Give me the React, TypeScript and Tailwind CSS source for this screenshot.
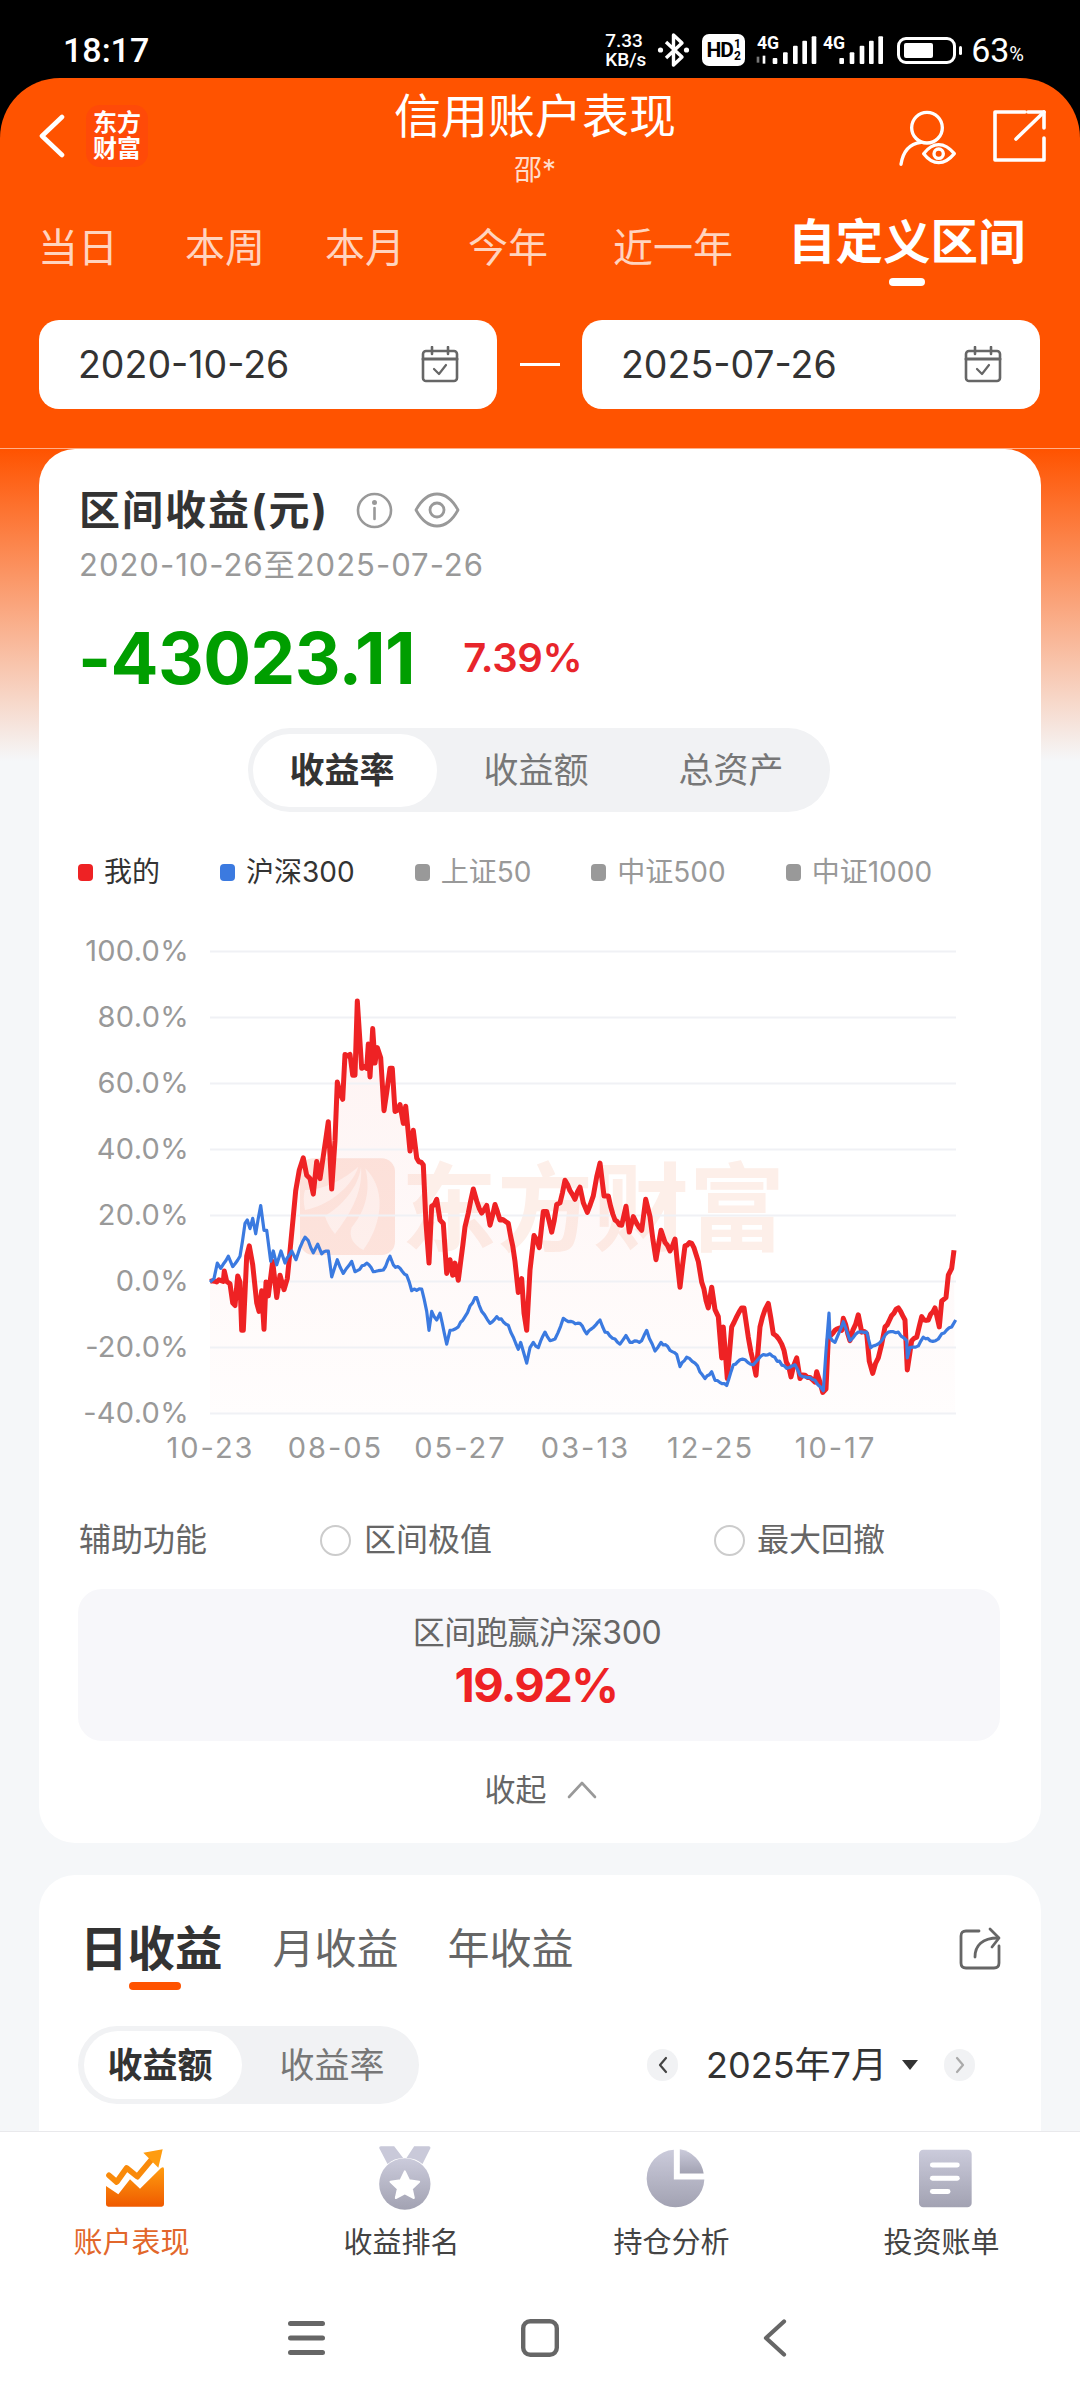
import React from 'react';

// chart traces read off the reference, [x, y] in zoomed units; right-hand part is offset by 1320
const RED_LEFT: number[][] = [[450,1048],[490,1048],[493,1018],[500,1048],[510,1055],[518,1110],[525,1118],[533,1032],[540,1050],[545,1190],[550,1190],[560,975],[568,945],[578,1000],[590,1110],[597,1135],[605,1075],[612,1187],[618,1050],[625,1090],[638,990],[650,1095],[660,1030],[672,1072],[682,1040],[690,960],[700,860],[707,785],[718,725],[730,690],[740,740],[750,750],[760,795],[770,700],[780,750],[790,685],[805,585],[815,780],[825,640],[832,470],[848,520],[855,390],[870,390],[878,450],[885,450],[892,235],[905,430],[920,430],[925,360],[930,455],[938,315],[945,415],[952,370],[962,400],[972,553],[980,500],[990,430],[997,430],[1005,555],[1020,535],[1030,590],[1037,540],[1050,670],[1060,610],[1070,690],[1090,710],[1098,880],[1107,995],[1115,830],[1130,810],[1140,870],[1150,880],[1160,1025],[1170,985],[1178,1030],[1185,995],[1195,1045],[1215,890],[1225,850],[1240,780],[1250,815],[1265,850],[1280,828],[1290,885],[1305,825],[1320,870]];
const RED_RIGHT: number[][] = [[25,880],[45,990],[55,1080],[65,1040],[72,1140],[80,1190],[90,1015],[102,915],[118,950],[130,845],[140,845],[155,905],[170,825],[180,820],[195,755],[210,785],[225,810],[240,775],[250,820],[262,848],[280,800],[290,745],[300,705],[312,800],[325,800],[345,870],[365,885],[378,830],[388,905],[400,860],[410,880],[425,900],[437,810],[450,860],[468,985],[483,900],[495,935],[510,960],[525,925],[540,1065],[555,945],[575,938],[595,990],[605,1050],[625,1125],[635,1065],[645,1130],[655,1150],[665,1270],[670,1180],[682,1330],[695,1180],[710,1150],[725,1125],[732,1125],[745,1210],[768,1320],[780,1180],[795,1130],[805,1112],[820,1200],[845,1230],[873,1325],[890,1270],[900,1330],[915,1320],[945,1340],[950,1310],[968,1370],[978,1360],[985,1215],[1005,1190],[1025,1190],[1030,1155],[1050,1220],[1075,1145],[1085,1195],[1100,1200],[1108,1280],[1118,1315],[1135,1270],[1145,1230],[1155,1180],[1195,1125],[1215,1160],[1222,1305],[1235,1220],[1250,1210],[1265,1150],[1285,1160],[1305,1125],[1318,1180],[1325,1105],[1338,1095],[1345,1030],[1355,1010],[1362,958]];
const BLUE_LEFT: number[][] = [[450,1050],[462,1040],[472,995],[482,1010],[505,975],[518,1005],[540,975],[555,880],[562,870],[570,895],[578,865],[587,910],[602,828],[612,900],[620,900],[632,990],[640,960],[650,1000],[663,960],[675,995],[695,960],[708,985],[720,950],[735,920],[745,930],[760,965],[773,940],[785,968],[805,960],[815,1035],[832,985],[850,1025],[875,990],[885,1020],[920,995],[940,1020],[970,1015],[990,975],[1000,1000],[1020,1010],[1040,1030],[1055,1075],[1085,1070],[1100,1135],[1107,1190],[1115,1135],[1130,1160],[1140,1140],[1160,1230],[1170,1190],[1195,1180],[1215,1150],[1245,1095],[1250,1095],[1265,1135],[1290,1170],[1310,1150]];
const BLUE_RIGHT: number[][] = [[25,1175],[40,1210],[55,1245],[62,1225],[80,1285],[90,1240],[100,1225],[115,1240],[135,1195],[150,1220],[165,1215],[190,1155],[205,1165],[240,1170],[260,1200],[300,1160],[315,1195],[345,1215],[360,1230],[378,1205],[390,1225],[425,1220],[440,1190],[465,1250],[483,1225],[530,1260],[540,1295],[560,1268],[585,1285],[615,1330],[635,1310],[645,1335],[680,1350],[700,1290],[720,1275],[735,1275],[760,1290],[790,1260],[810,1258],[860,1300],[885,1290],[900,1320],[945,1335],[970,1365],[978,1250],[987,1140],[990,1210],[1005,1225],[1030,1165],[1050,1220],[1075,1195],[1100,1195],[1112,1240],[1140,1225],[1165,1195],[1195,1195],[1220,1220],[1222,1270],[1230,1240],[1255,1235],[1270,1210],[1290,1220],[1315,1215],[1325,1200],[1355,1180],[1367,1160]];

// zoomed units to svg px: svg starts at page (210, 936)
const toSvg = (x: number, y: number): number[] => [x / 3 - 150, y / 2.9 - 16];

const rough = (left: number[][], right: number[][], amp: number, seed: number) => {
  const pts = [...left, ...right.map(([x, y]) => [x + 1320, y])].map(([x, y]) => toSvg(x, y));
  const out: number[][] = [];
  let n = seed;
  pts.forEach((p, i) => {
    out.push(p);
    const next = pts[i + 1];
    if (!next) return;
    const steps = Math.floor((next[0] - p[0]) / 2.2);
    for (let s = 1; s < steps; s++) {
      n += 1;
      const r = Math.sin(n * 12.9898) * 43758.5453;
      const j = (r - Math.floor(r) - 0.5) * 2 * amp;
      const t = s / steps;
      out.push([p[0] + (next[0] - p[0]) * t, p[1] + (next[1] - p[1]) * t + j]);
    }
  });
  return out;
};

const line = (pts: number[][]) => pts.map(([x, y]) => `${x.toFixed(1)},${y.toFixed(1)}`).join(' ');

const redPts = rough(RED_LEFT, RED_RIGHT, 2.4, 3);
const bluePts = rough(BLUE_LEFT, BLUE_RIGHT, 1.3, 91);
const gridYs = [15.5, 81.5, 147.5, 213.5, 279.5, 345.5, 411.5, 477.5];

const Chart = () => (
  <svg width="746" height="492" viewBox="0 0 746 492" className="block overflow-visible">
    <defs>
      <linearGradient id="areaFill" x1="0" y1="0" x2="0" y2="1">
        <stop offset="0" stopColor="#f0322a" stopOpacity="0.06" />
        <stop offset="1" stopColor="#f0322a" stopOpacity="0.01" />
      </linearGradient>
    </defs>
    <g transform="translate(70 194) scale(0.3333)">
      <rect x="60" y="85" width="285" height="290" rx="40" fill="#fde8e1" />
      <path d="M235 110C215 170 150 225 75 240C70 215 70 195 75 180C130 180 190 150 235 110Z" fill="#fef5f2" />
      <path d="M243 112C250 190 205 260 165 312C150 295 140 275 135 258C190 225 235 170 243 112Z" fill="#fef5f2" />
      <path d="M256 115C330 190 295 300 250 360C220 345 205 320 215 292C260 240 272 175 256 115Z" fill="#fef5f2" />
    </g>
    <text x="191" y="307" fontSize="96" fontWeight="700" fill="#fdefe9" fontFamily="'Noto Sans CJK SC', sans-serif">东方财富</text>
    <polygon points={`${line(redPts)} 745,477 0,477`} fill="url(#areaFill)" />
    {gridYs.map((y) => (
      <line key={y} x1="0" x2="746" y1={y} y2={y} stroke="#f0f1f5" strokeWidth="2" />
    ))}
    <polyline points={line(redPts)} fill="none" stroke="#ee2224" strokeWidth="5" strokeLinejoin="round" />
    <polyline points={line(bluePts)} fill="none" stroke="#3b7ae0" strokeWidth="3.2" strokeLinejoin="round" />
  </svg>
);

const CalendarIcon = () => (
  <svg width="38" height="37" viewBox="0 0 38 37" fill="none" stroke="#666" strokeWidth="2.6" strokeLinecap="round" strokeLinejoin="round">
    <rect x="2" y="5" width="34" height="30" rx="3" />
    <path d="M2 13H36" strokeWidth="3" />
    <path d="M11 1V8M27 1V8" />
    <path d="M13 23L18 28L25 19" strokeWidth="2.2" />
  </svg>
);

const DateBox = ({ value }: { value: string }) => (
  <div className="w-[458px] h-[89px] rounded-[20px] bg-white flex items-center justify-between pl-[39px] pr-[38px]">
    <span className="text-[37.5px] leading-[44px] text-[#333]">{value}</span>
    <CalendarIcon />
  </div>
);

const StatusBar = () => (
  <div className="h-[78px] shrink-0 bg-black flex items-center justify-between pl-[63px] pr-[56px] pt-[22px] text-white [font-family:Roboto,sans-serif]">
    <span className="text-[34px] leading-[40px] font-medium">18:17</span>
    <div className="flex items-center">
      <div className="w-[42px] flex flex-col text-[19px] leading-[19px] font-medium">
        <span>7.33</span>
        <span className="whitespace-nowrap">KB/s</span>
      </div>
      <svg className="ml-[10px]" width="33" height="36" viewBox="0 0 33 36" fill="none" stroke="white" strokeWidth="3.4" strokeLinejoin="round">
        <path d="M9 10L25 25L16.5 33V3L25 11L9 26" />
        <circle cx="3.5" cy="18" r="2.6" fill="white" stroke="none" />
        <circle cx="29.5" cy="18" r="2.6" fill="white" stroke="none" />
      </svg>
      <div className="ml-[12px] w-[43px] h-[32px] rounded-[7px] bg-white flex items-center justify-center gap-[1px] text-black font-bold">
        <span className="text-[21px] leading-[24px] tracking-[-1px]">HD</span>
        <span className="flex flex-col text-[12px] leading-[12px]">
          <span>1</span>
          <span>2</span>
        </span>
      </div>
      <svg className="ml-[10px]" width="130" height="32" viewBox="580 100 390 96" fill="white">
        <text x="586" y="144" fontSize="53" fontWeight="700" fontFamily="Roboto, sans-serif">4G</text>
        <text x="784" y="144" fontSize="53" fontWeight="700" fontFamily="Roboto, sans-serif">4G</text>
        <rect x="585" y="168" width="8" height="18" fill="#777" />
        <rect x="603" y="165" width="8" height="24" />
        <rect x="633" y="172" width="14" height="18" rx="3" />
        <rect x="664" y="155" width="14" height="35" rx="3" />
        <rect x="694" y="135" width="14" height="55" rx="3" />
        <rect x="722" y="120" width="14" height="70" rx="3" />
        <rect x="750" y="107" width="14" height="83" rx="3" />
        <rect x="833" y="172" width="14" height="18" rx="3" />
        <rect x="864" y="155" width="14" height="35" rx="3" />
        <rect x="894" y="135" width="14" height="55" rx="3" />
        <rect x="922" y="120" width="14" height="70" rx="3" />
        <rect x="950" y="107" width="14" height="83" rx="3" />
      </svg>
      <div className="ml-[12px] w-[59px] h-[27px] rounded-[9px] border-[3px] border-white flex items-center pl-[4px]">
        <div className="w-[29px] h-[15px] bg-white rounded-[2px]" />
      </div>
      <div className="ml-[3px] w-[3px] h-[9px] rounded-full bg-white" />
      <span className="ml-[9px] text-[34px] leading-[40px]">63</span>
      <span className="text-[20px] leading-[24px] mt-[8px]">%</span>
    </div>
  </div>
);

const TABS = [
  { label: '当日', gap: 'ml-0' },
  { label: '本周', gap: 'ml-[67px]' },
  { label: '本月', gap: 'ml-[60px]' },
  { label: '今年', gap: 'ml-[63px]' },
  { label: '近一年', gap: 'ml-[65px]' },
];

const Header = () => (
  <div className="h-[371px] shrink-0 bg-[#ff5300] rounded-t-[60px] border-b border-[#ffb08a] flex flex-col">
    <div className="h-[122px] grid grid-cols-[1fr_auto_1fr] text-white">
      <div className="flex items-center h-[62px] mt-[27px] pl-[39px]">
        <svg width="26" height="44" viewBox="0 0 26 44" fill="none" stroke="white" strokeWidth="4.6" strokeLinecap="round" strokeLinejoin="round">
          <path d="M23 3L3 22L23 41" />
        </svg>
        <div className="ml-[21px] w-[62px] h-[62px] rounded-[14px] bg-[#ff4a08] flex flex-col items-center justify-center text-[24px] leading-[26px] font-bold">
          <span>东方</span>
          <span>财富</span>
        </div>
      </div>
      <div className="flex flex-col items-center pr-[10px]">
        <span className="mt-[15px] text-[47px] leading-[46px]">信用账户表现</span>
        <span className="mt-[14px] text-[28px] leading-[34px] text-[#ffdccb]">邵*</span>
      </div>
      <div className="flex justify-end items-start pt-[31px] pr-[33px] gap-[36px]">
        <svg width="60" height="58" viewBox="1000 325 180 172" fill="none" stroke="white" strokeWidth="10" strokeLinecap="round" strokeLinejoin="round">
          <circle cx="1090" cy="380" r="46" />
          <path d="M1012 490C1018 450 1040 428 1072 424" />
          <path d="M1080 458C1108 422 1142 422 1172 458C1142 494 1108 494 1080 458Z" />
          <circle cx="1125" cy="458" r="14" />
        </svg>
        <svg width="54" height="54" viewBox="0 0 54 54" fill="none" stroke="white" strokeWidth="3.6" strokeLinecap="round" strokeLinejoin="round">
          <path d="M32 3H2V51H51V29" />
          <path d="M23 30L51 3" />
          <path d="M35 3H51V19" />
        </svg>
      </div>
    </div>

    <div className="h-[90px] flex items-start pl-[38px]">
      {TABS.map((t) => (
        <span key={t.label} className={`mt-[24px] text-[40px] leading-[48px] text-white/75 ${t.gap}`}>{t.label}</span>
      ))}
      <div className="ml-[55px] mt-[14px] flex flex-col items-center">
        <span className="text-[47.5px] leading-[56px] font-bold text-white">自定义区间</span>
        <div className="mt-[8px] w-[36px] h-[8px] rounded-full bg-white" />
      </div>
    </div>

    <div className="mt-[30px] flex items-center ml-[39px] mr-[40px]">
      <DateBox value="2020-10-26" />
      <div className="flex-1 flex justify-center">
        <div className="w-[40px] h-[3px] bg-white" />
      </div>
      <DateBox value="2025-07-26" />
    </div>
  </div>
);

const LEGEND = [
  { label: '我的', dot: 'bg-[#ee2224]', text: 'text-[#333]' },
  { label: '沪深300', dot: 'bg-[#3b7ae0]', text: 'text-[#333]' },
  { label: '上证50', dot: 'bg-[#999]', text: 'text-[#999]' },
  { label: '中证500', dot: 'bg-[#999]', text: 'text-[#999]' },
  { label: '中证1000', dot: 'bg-[#999]', text: 'text-[#999]' },
];
const Y_LABELS = ['100.0%', '80.0%', '60.0%', '40.0%', '20.0%', '0.0%', '-20.0%', '-40.0%'];
const X_LABELS = ['10-23', '08-05', '05-27', '03-13', '12-25', '10-17'];

const RangeCard = () => (
  <div className="h-[1394px] shrink-0 bg-white rounded-[36px] pl-[40px] pr-[39px] flex flex-col">
    <div className="mt-[39px] h-[44px] flex items-center">
      <span className="text-[41px] leading-[44px] font-bold text-[#333] tracking-[2px]">区间收益(元)</span>
      <svg className="ml-[27px]" width="37" height="37" viewBox="0 0 37 37" fill="none" stroke="#999" strokeWidth="2.6" strokeLinecap="round">
        <circle cx="18.5" cy="18.5" r="16.5" />
        <path d="M18.5 16V27" />
        <circle cx="18.5" cy="10.5" r="1.2" fill="#999" />
      </svg>
      <svg className="ml-[21px]" width="46" height="36" viewBox="0 0 46 36" fill="none" stroke="#999" strokeWidth="2.8" strokeLinejoin="round">
        <path d="M2 18C8 7 15 2 23 2C31 2 38 7 44 18C38 29 31 34 23 34C15 34 8 29 2 18Z" />
        <circle cx="23" cy="18" r="7" />
      </svg>
    </div>
    <span className="mt-[13px] text-[31px] leading-[40px] text-[#999] tracking-[1px]">2020-10-26至2025-07-26</span>
    <div className="mt-[33px] h-[80px] flex items-center">
      <span className="text-[71px] leading-[80px] font-bold text-[#009e00] -ml-[1px] tracking-[-0.6px]">-43023.11</span>
      <span className="ml-[48px] text-[40px] leading-[50px] font-semibold text-[#e8252b] tracking-[-0.4px]">7.39%</span>
    </div>
    <div className="mt-[30px] flex justify-center pr-[3px]">
      <div className="w-[582px] h-[84px] rounded-full bg-[#f1f2f4] flex items-center pl-[5px] text-[35px] leading-[44px] text-[#777]">
        <div className="w-[184px] h-[73px] rounded-full bg-white flex items-center justify-center pr-[6px] font-bold text-[#333]">收益率</div>
        <div className="w-[198px] text-center">收益额</div>
        <div className="w-[192px] text-center">总资产</div>
      </div>
    </div>
    <div className="mt-[40px] h-[40px] flex items-center gap-[60px] -ml-[1px]">
      {LEGEND.map((l) => (
        <div key={l.label} className="flex items-center gap-[11px]">
          <div className={`w-[15px] h-[17px] rounded-[4px] ${l.dot}`} />
          <span className={`text-[28px] leading-[36px] ${l.text}`}>{l.label}</span>
        </div>
      ))}
    </div>

    <div className="mt-[44px] flex">
      <div className="w-[110px] flex flex-col gap-[36px] text-right text-[29px] leading-[30px] text-[#999] tracking-[0.3px]">
        {Y_LABELS.map((l) => (
          <span key={l} className="h-[30px] whitespace-nowrap">{l}</span>
        ))}
      </div>
      <div className="ml-[21px]">
        <Chart />
      </div>
    </div>
    <div className="ml-[69px] flex text-[29px] leading-[40px] text-[#999] text-center tracking-[2px]">
      {X_LABELS.map((l) => (
        <span key={l} className="w-[125px]">{l}</span>
      ))}
    </div>

    <div className="mt-[52px] h-[40px] flex items-center text-[32px] leading-[40px] text-[#666]">
      <span className="w-[241px]">辅助功能</span>
      <div className="w-[394px] flex items-center gap-[13px]">
        <div className="w-[31px] h-[31px] rounded-full border-2 border-[#ccc]" />
        <span>区间极值</span>
      </div>
      <div className="flex items-center gap-[12px]">
        <div className="w-[31px] h-[31px] rounded-full border-2 border-[#ccc]" />
        <span>最大回撤</span>
      </div>
    </div>

    <div className="mt-[29px] -ml-[1px] w-[922px] h-[152px] rounded-[24px] bg-[#f7f7fa] flex flex-col items-center pt-[24px]">
      <span className="text-[32px] leading-[40px] text-[#666] tracking-[-0.4px] pr-[4px]">区间跑赢沪深300</span>
      <span className="mt-[4px] text-[47px] leading-[56px] font-bold text-[#ee2224] tracking-[-1.6px] pr-[6px]">19.92%</span>
    </div>

    <div className="mt-[29px] h-[40px] flex justify-center items-center gap-[20px]">
      <span className="text-[31px] leading-[40px] text-[#666]">收起</span>
      <svg width="30" height="18" viewBox="0 0 30 18" fill="none" stroke="#999" strokeWidth="2.6" strokeLinecap="round" strokeLinejoin="round">
        <path d="M2 16L15 2L28 16" />
      </svg>
    </div>
  </div>
);

const ProfitCard = () => (
  <div className="h-[400px] shrink-0 bg-white rounded-t-[36px] flex flex-col">
    <div className="mt-[46px] flex items-start justify-between pl-[41px] pr-[40px]">
      <div className="flex items-start">
        <div className="flex flex-col">
          <span className="text-[47.5px] leading-[56px] font-bold text-[#333]">日收益</span>
          <div className="mt-[5px] ml-[49px] w-[52px] h-[8px] rounded-full bg-[#ff5300]" />
        </div>
        <span className="ml-[50px] text-[42px] leading-[56px] text-[#666]">月收益</span>
        <span className="ml-[49px] text-[42px] leading-[56px] text-[#666]">年收益</span>
      </div>
      <svg className="mt-[6px]" width="42" height="43" viewBox="0 0 42 43" fill="none" stroke="#666" strokeWidth="2.8" strokeLinecap="round" strokeLinejoin="round">
        <path d="M20 4H7Q2 4 2 9V36Q2 41 7 41H35Q40 41 40 36V19" />
        <path d="M16 30C16 19 23 11 39 11" />
        <path d="M31 2L40 11L33 20" />
      </svg>
    </div>
    <div className="mt-[36px] flex items-center justify-between pl-[39px] pr-[66px]">
      <div className="w-[341px] h-[78px] rounded-full bg-[#f1f2f4] flex items-center pl-[6px] text-[35px] leading-[44px] text-[#777]">
        <div className="w-[158px] h-[68px] rounded-full bg-white flex items-center justify-center pr-[6px] font-bold text-[#333]">收益额</div>
        <div className="w-[177px] text-center pl-[3px]">收益率</div>
      </div>
      <div className="flex items-center">
        <div className="w-[31px] h-[32px] rounded-full bg-[#f1f2f4] flex items-center justify-center">
          <svg width="10" height="18" viewBox="0 0 10 18" fill="none" stroke="#444" strokeWidth="2.2" strokeLinecap="round" strokeLinejoin="round">
            <path d="M8 2L2 9L8 16" />
          </svg>
        </div>
        <span className="ml-[28px] text-[36px] leading-[44px] text-[#333]">2025年7月</span>
        <div className="ml-[15px] w-0 h-0 border-x-[8px] border-x-transparent border-t-[10px] border-t-[#333]" />
        <div className="ml-[26px] w-[31px] h-[32px] rounded-full bg-[#f1f2f4] flex items-center justify-center">
          <svg width="10" height="18" viewBox="0 0 10 18" fill="none" stroke="#aaa" strokeWidth="2.2" strokeLinecap="round" strokeLinejoin="round">
            <path d="M2 2L8 9L2 16" />
          </svg>
        </div>
      </div>
    </div>
  </div>
);

const TrendIcon = () => (
  <svg width="60" height="60" viewBox="75 36 180 180">
    <defs>
      <linearGradient id="trendFill" x1="0" y1="0" x2="0" y2="1">
        <stop offset="0" stopColor="#ff9c0f" />
        <stop offset="1" stopColor="#ef5a00" />
      </linearGradient>
    </defs>
    <path d="M78 150L115 175L150 130L180 158L243 96Q252 90 252 100V205Q252 212 245 212H85Q78 212 78 205Z" fill="url(#trendFill)" />
    <path d="M87 118L110 138L140 96L172 122L222 62" fill="none" stroke="#f98a0a" strokeWidth="17" strokeLinecap="round" strokeLinejoin="round" />
    <path d="M190 50L248 40L235 95Z" fill="#ff9c0f" />
  </svg>
);

const GrayDefs = ({ id }: { id: string }) => (
  <defs>
    <linearGradient id={id} x1="0" y1="0" x2="0" y2="1">
      <stop offset="0" stopColor="#cbcbdb" />
      <stop offset="1" stopColor="#a2a2b2" />
    </linearGradient>
  </defs>
);

const MedalIcon = () => (
  <svg width="52" height="64" viewBox="900 32 155 192">
    <GrayDefs id="medalFill" />
    <path d="M900 38Q900 33 905 33H945L972 68Q945 68 925 86Z" fill="#c9c9d9" />
    <path d="M1054 38Q1054 33 1049 33H1005L982 68Q1010 68 1030 86Z" fill="#c9c9d9" />
    <circle cx="977" cy="146" r="77" fill="url(#medalFill)" />
    <path d="M977 108L990 135L1020 139L998 160L1004 188L977 174L950 188L956 160L934 139L964 135Z" fill="white" stroke="white" strokeWidth="6" strokeLinejoin="round" />
  </svg>
);

const PieIcon = () => (
  <svg width="59" height="59" viewBox="76 41 178 178">
    <GrayDefs id="pieFill" />
    <path d="M160 43V133H252A87 87 0 1 1 160 43Z" fill="url(#pieFill)" />
    <path d="M178 42A87 87 0 0 1 250 115H178Z" fill="url(#pieFill)" />
  </svg>
);

const BillIcon = () => (
  <svg width="53" height="59" viewBox="895 41 160 176">
    <GrayDefs id="billFill" />
    <rect x="895" y="42" width="159" height="174" rx="13" fill="url(#billFill)" />
    <rect x="928" y="81" width="90" height="15" rx="7.5" fill="white" />
    <rect x="928" y="121" width="90" height="15" rx="7.5" fill="white" />
    <rect x="928" y="161" width="62" height="15" rx="7.5" fill="white" />
  </svg>
);

const NAV = [
  { label: '账户表现', icon: <TrendIcon />, text: 'text-[#e2672b]' },
  { label: '收益排名', icon: <MedalIcon />, text: 'text-[#444]' },
  { label: '持仓分析', icon: <PieIcon />, text: 'text-[#444]' },
  { label: '投资账单', icon: <BillIcon />, text: 'text-[#444]' },
];

const BottomBar = () => (
  <div className="h-[269px] shrink-0 bg-white border-t border-[#e9e9ec] flex flex-col">
    <div className="mt-[14px] grid grid-cols-4">
      {NAV.map((n) => (
        <div key={n.label} className="flex flex-col items-center">
          <div className="h-[64px] flex items-center justify-center">{n.icon}</div>
          <span className={`mt-[15px] pr-[7px] text-[29px] leading-[36px] ${n.text}`}>{n.label}</span>
        </div>
      ))}
    </div>
    <div className="mt-[57px] h-[40px] flex items-center pl-[288px]">
      <svg width="37" height="34" viewBox="0 0 37 34" fill="#666">
        <rect y="0" width="37" height="5" rx="2.5" />
        <rect y="14.5" width="37" height="5" rx="2.5" />
        <rect y="29" width="37" height="5" rx="2.5" />
      </svg>
      <svg className="ml-[196px]" width="38" height="38" viewBox="0 0 38 38" fill="none" stroke="#666" strokeWidth="4.4">
        <rect x="2.2" y="2.2" width="33.6" height="33.6" rx="7" />
      </svg>
      <svg className="ml-[204px]" width="24" height="38" viewBox="0 0 24 38" fill="none" stroke="#666" strokeWidth="4.2" strokeLinecap="round" strokeLinejoin="round">
        <path d="M21 2.5L3 19L21 35.5" />
      </svg>
    </div>
  </div>
);

export default function App() {
  return (
    <div lang="zh-CN" className="w-[1080px] h-[2400px] flex flex-col overflow-hidden bg-black [font-family:Inter,'Noto_Sans_CJK_SC',sans-serif]">
      <StatusBar />
      <Header />
      <div className="flex-1 min-h-0 overflow-hidden px-[39px] flex flex-col gap-[32px] bg-[linear-gradient(#ff5300_0,#f5f7f9_312px)]">
        <RangeCard />
        <ProfitCard />
      </div>
      <BottomBar />
    </div>
  );
}
